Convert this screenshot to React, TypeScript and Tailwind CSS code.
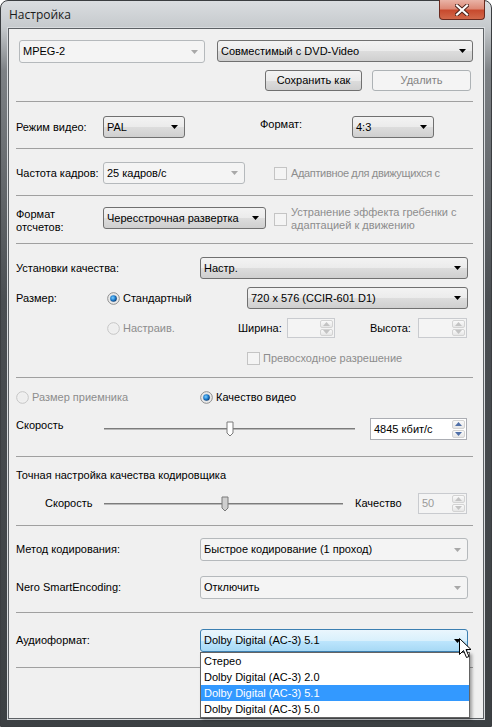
import React from 'react';

type ComboKind = 'normal' | 'disabled' | 'hot';

const comboSkin: Record<ComboKind, string> = {
  normal: 'border-[#707070] bg-[linear-gradient(to_bottom,#f3f3f3_0%,#ebebeb_50%,#dddddd_50%,#cfcfcf_100%)]',
  disabled: 'border-[#b5b9bc] bg-[#f4f4f4]',
  hot: 'border-[#3c7fb1] bg-[linear-gradient(to_bottom,#eaf6fd_0%,#d9f0fc_50%,#bee6fd_50%,#a7d9f5_100%)]',
};

const Arrow = ({ color = '#000' }: { color?: string }) => (
  <svg width="7" height="4" viewBox="0 0 7 4" className="shrink-0">
    <polygon points="0,0 7,0 3.5,4" fill={color} />
  </svg>
);

const Combo = ({
  text,
  className,
  kind = 'normal',
  children,
}: {
  text: string;
  className: string;
  kind?: ComboKind;
  children?: React.ReactNode;
}) => (
  <div className={`relative flex shrink-0 items-center rounded-[3px] border pl-[3px] pr-[6px] ${comboSkin[kind]} ${className}`}>
    <span className="flex-1 truncate text-black">{text}</span>
    <Arrow color={kind === 'disabled' ? '#a8a8a8' : '#000'} />
    {children}
  </div>
);

const Button = ({ text, className, disabled }: { text: string; className: string; disabled?: boolean }) => (
  <div
    className={`flex shrink-0 items-center justify-center rounded-[3px] border ${
      disabled
        ? 'border-[#adb2b5] bg-[#f4f4f4] text-[#838383]'
        : 'border-[#707070] bg-[linear-gradient(to_bottom,#f3f3f3_0%,#ebebeb_50%,#dddddd_50%,#cfcfcf_100%)] text-black'
    } ${className}`}
  >
    {text}
  </div>
);

const Tri = ({ up, color }: { up?: boolean; color: string }) => (
  <svg width="7" height="4" viewBox="0 0 7 4">
    <polygon points={up ? '0,4 7,4 3.5,0' : '0,0 7,0 3.5,4'} fill={color} />
  </svg>
);

const Spin = ({ text, className, disabled }: { text?: string; className: string; disabled?: boolean }) => {
  const tri = disabled ? '#c3c3c3' : '#4f6fa8';
  return (
    <div className={`flex shrink-0 border ${disabled ? 'border-[#c9cbcf] bg-[#f4f4f4] text-[#9a9a9a]' : 'border-[#abadb3] bg-white text-black'} ${className}`}>
      <div className="flex flex-1 items-center pl-[3px]">{text}</div>
      <div className="flex w-[15px] flex-col gap-px p-px">
        <div className="flex flex-1 items-center justify-center rounded-[2px] border border-[#d3d3d3] bg-[linear-gradient(to_bottom,#fafafa,#e6e6e6)]">
          <Tri up color={tri} />
        </div>
        <div className="flex flex-1 items-center justify-center rounded-[2px] border border-[#d3d3d3] bg-[linear-gradient(to_bottom,#fafafa,#e6e6e6)]">
          <Tri color={tri} />
        </div>
      </div>
    </div>
  );
};

const Radio = ({ checked, disabled }: { checked?: boolean; disabled?: boolean }) => (
  <svg width="13" height="13" viewBox="0 0 13 13" className="shrink-0">
    <defs>
      <radialGradient id="rdot" cx="0.4" cy="0.4" r="0.6">
        <stop offset="0" stopColor="#7fd0ff" />
        <stop offset="0.6" stopColor="#1f7fd0" />
        <stop offset="1" stopColor="#0c3f78" />
      </radialGradient>
    </defs>
    <circle cx="6.5" cy="6.5" r="5.8" fill={disabled ? '#f2f2f2' : '#f0f0f0'} stroke={disabled ? '#c4c4c4' : '#8a8a8a'} />
    <circle cx="6.5" cy="6.5" r="4.3" fill={disabled ? '#eeeeee' : '#e2e2e2'} />
    {checked && <circle cx="6.5" cy="6.5" r="3.3" fill="url(#rdot)" />}
  </svg>
);

const Check = () => <div className="h-[13px] w-[13px] shrink-0 border border-[#c4c4c4] bg-[#f4f4f4]" />;

const Slider = ({ className, thumb, grey }: { className: string; thumb: number; grey?: boolean }) => (
  <svg className={`shrink-0 ${className}`} height="22" preserveAspectRatio="none">
    <rect x="0" y="10" width="100%" height="1" fill="#7c7c7c" />
    <rect x="0" y="11" width="100%" height="1" fill="#b8b8b8" />
    <path
      d={`M${thumb},4 H${thumb + 6} V15 L${thumb + 3},18 L${thumb},15 Z`}
      fill={grey ? '#cfcfcf' : '#ffffff'}
      stroke="#7a7a7a"
      strokeWidth="1"
    />
  </svg>
);

const Sep = ({ className }: { className: string }) => <div className={`h-px w-[457px] bg-[#a0a0a0] ${className}`} />;

const Cursor = () => (
  <svg width="13" height="21" viewBox="0 0 13 21" className="pointer-events-none absolute left-[258px] top-[8px]">
    <path d="M0.5,0.5 L0.5,16.5 L4.5,12.5 L7.5,19.5 L10,18.5 L7,11.5 L12,11.5 Z" fill="#fff" stroke="#000" strokeWidth="1" />
  </svg>
);

const audioItems = ['Стерео', 'Dolby Digital (AC-3) 2.0', 'Dolby Digital (AC-3) 5.1', 'Dolby Digital (AC-3) 5.0'];

export default function App() {
  return (
    <div className="h-[727px] w-[492px] bg-white">
      <div className="flex h-[727px] w-[492px] flex-col rounded-t-[8px] border border-[#3a3d40] bg-[linear-gradient(to_bottom,#dadde0_0px,#c6cacd_26px,#7d8185_70px,#4a4e52_300px,#3c4043_100%)] px-[7px] pb-[7px] font-['Liberation_Sans',Arial,sans-serif] text-[11px] leading-[13px]">
        {/* title bar */}
        <div className="flex h-[27px] shrink-0 items-start justify-between">
          <span className="pl-px pt-[6px] font-['Open_Sans',sans-serif] text-[12px] leading-[16px] text-[#1a1a1a]">Настройка</span>
          <div className="-mr-px mt-[-1px] flex h-[20px] w-[46px] items-center justify-center rounded-b-[4px] border border-t-0 border-[#6a2a1f] bg-[linear-gradient(to_bottom,#e9b3a6_0%,#dd8a77_45%,#c84a2e_55%,#d2684a_100%)]">
            <svg width="14" height="12" viewBox="0 0 14 12">
              <path d="M2,1.5 L12,10.5 M12,1.5 L2,10.5" stroke="#4a2018" strokeWidth="4" strokeLinecap="square" />
              <path d="M2,1.5 L12,10.5 M12,1.5 L2,10.5" stroke="#ffffff" strokeWidth="2.2" strokeLinecap="square" />
            </svg>
          </div>
        </div>

        {/* client area */}
        <div className="relative flex flex-1 flex-col border border-[#5d6165] bg-[#f0f0f0] pl-[7px] shadow-[0_0_0_1px_#d9dcdf]">
          <div className="mt-[11px] flex">
            <Combo text="MPEG-2" kind="disabled" className="ml-[3px] h-[23px] w-[186px]" />
            <Combo text="Совместимый с DVD-Video" className="ml-[12px] h-[22px] w-[256px]" />
          </div>
          <div className="mt-[7px] flex pl-[249px]">
            <Button text="Сохранить как" className="h-[21px] w-[97px]" />
            <Button text="Удалить" disabled className="ml-[10px] h-[21px] w-[99px]" />
          </div>
          <Sep className="mt-[10px]" />

          <div className="mt-[14px] flex h-[22px] items-center">
            <span className="w-[87px] shrink-0">Режим видео:</span>
            <Combo text="PAL" className="h-[22px] w-[82px]" />
            <span className="mb-[5px] ml-[75px] w-[92px] shrink-0">Формат:</span>
            <Combo text="4:3" className="h-[22px] w-[82px]" />
          </div>
          <Sep className="mt-[10px]" />

          <div className="mt-[13px] flex h-[22px] items-center">
            <span className="w-[87px] shrink-0">Частота кадров:</span>
            <Combo text="25 кадров/с" kind="disabled" className="h-[22px] w-[142px]" />
            <div className="ml-[29px]">
              <Check />
            </div>
            <span className="ml-[4px] whitespace-nowrap tracking-[-0.35px] text-[#8d8d8d]">Адаптивное для движущихся с</span>
          </div>
          <Sep className="mt-[11px]" />

          <div className="mt-[11px] flex h-[28px] items-start">
            <span className="mt-px w-[87px] shrink-0">
              Формат
              <br />
              отсчетов:
            </span>
            <Combo text="Чересстрочная развертка" className="h-[22px] w-[163px]" />
            <div className="ml-[8px] mt-[6px]">
              <Check />
            </div>
            <span className="ml-[4px] mt-[-1px] text-[#8d8d8d]">
              Устранение эффекта гребенки с
              <br />
              адаптацией к движению
            </span>
          </div>
          <Sep className="mt-[8px]" />

          <div className="mt-[13px] flex h-[22px] items-center">
            <span className="w-[184px] shrink-0">Установки качества:</span>
            <Combo text="Настр." className="h-[22px] w-[268px]" />
          </div>
          <div className="mt-[8px] flex h-[22px] items-center">
            <span className="w-[91px] shrink-0">Размер:</span>
            <div className="flex w-[140px] shrink-0 items-center gap-[3px]">
              <Radio checked />
              <span>Стандартный</span>
            </div>
            <Combo text="720 x 576 (CCIR-601 D1)" className="h-[22px] w-[221px]" />
          </div>
          <div className="mt-[9px] flex h-[20px] items-center">
            <div className="ml-[91px] flex w-[131px] shrink-0 items-center gap-[3px] text-[#8d8d8d]">
              <Radio disabled />
              <span>Настраив.</span>
            </div>
            <span className="w-[49px] shrink-0">Ширина:</span>
            <Spin disabled className="h-[20px] w-[48px]" />
            <span className="ml-[35px] w-[48px] shrink-0">Высота:</span>
            <Spin disabled className="h-[20px] w-[49px]" />
          </div>
          <div className="mt-[14px] flex h-[13px] items-center pl-[231px]">
            <Check />
            <span className="ml-[3px] text-[#8d8d8d]">Превосходное разрешение</span>
          </div>
          <Sep className="mt-[12px]" />

          <div className="mt-[12px] flex h-[14px] items-center">
            <div className="flex w-[184px] shrink-0 items-center gap-[3px] text-[#8d8d8d]">
              <Radio disabled />
              <span>Размер приемника</span>
            </div>
            <div className="flex items-center gap-[3px]">
              <Radio checked />
              <span>Качество видео</span>
            </div>
          </div>
          <div className="mt-[14px] flex h-[22px] items-start">
            <span className="mt-px w-[88px] shrink-0">Скорость</span>
            <Slider className="w-[251px]" thumb={123} />
            <Spin text="4845 кбит/с" className="ml-[15px] h-[22px] w-[97px]" />
          </div>
          <Sep className="mt-[16px]" />

          <div className="mt-[11px] flex h-[14px] items-center">Точная настройка качества кодировщика</div>
          <div className="mt-[11px] flex h-[21px] items-center">
            <span className="ml-[29px] w-[59px] shrink-0">Скорость</span>
            <Slider className="w-[239px]" thumb={118} grey />
            <span className="ml-[12px] w-[63px] shrink-0">Качество</span>
            <Spin text="50" disabled className="h-[21px] w-[49px]" />
          </div>
          <Sep className="mt-[11px]" />

          <div className="mt-[12px] flex h-[23px] items-center">
            <span className="w-[184px] shrink-0">Метод кодирования:</span>
            <Combo text="Быстрое кодирование (1 проход)" kind="disabled" className="h-[23px] w-[268px]" />
          </div>
          <div className="mt-[15px] flex h-[23px] items-center">
            <span className="w-[184px] shrink-0">Nero SmartEncoding:</span>
            <Combo text="Отключить" kind="disabled" className="h-[23px] w-[268px]" />
          </div>
          <Sep className="mt-[13px]" />

          <div className="mt-[16px] flex h-[23px] items-center">
            <span className="w-[184px] shrink-0">Аудиоформат:</span>
            <Combo text="Dolby Digital (AC-3) 5.1" kind="hot" className="z-10 h-[23px] w-[268px]">
              <div className="absolute left-[-1px] top-[22px] w-[270px] border border-[#646464] bg-white py-0 shadow-[2px_2px_3px_rgba(0,0,0,0.35)]">
                {audioItems.map((item) => (
                  <div
                    key={item}
                    className={`flex h-[16px] items-center pl-[3px] ${
                      item.endsWith('5.1') ? 'bg-[#3399ff] text-white' : 'text-black'
                    }`}
                  >
                    {item}
                  </div>
                ))}
              </div>
              <Cursor />
            </Combo>
          </div>
          <Sep className="mt-[15px]" />
        </div>
      </div>
    </div>
  );
}
